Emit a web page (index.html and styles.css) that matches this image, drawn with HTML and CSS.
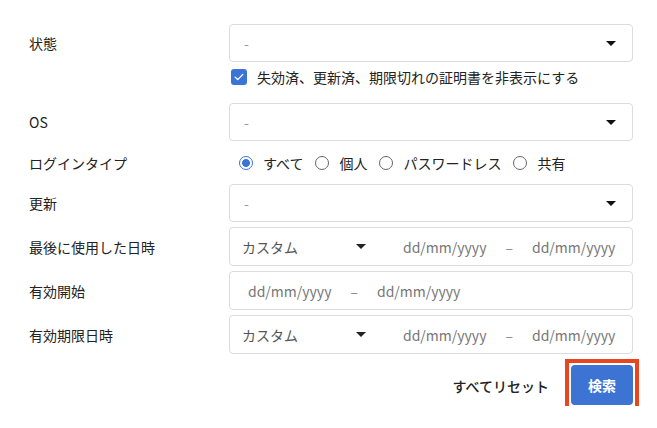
FILE: index.html
```html
<!DOCTYPE html>
<html lang="ja">
<head>
<meta charset="utf-8">
<link rel="stylesheet" href="styles.css">
</head>
<body>
<div class="form">
  <div class="row r-first">
    <div class="label">状態</div>
    <div class="ctrl"><div class="select"><span class="ph">-</span><span class="caret"></span></div></div>
  </div>
  <div class="row r-check">
    <div class="label"></div>
    <div class="ctrl">
      <div class="check">
        <span class="cbox"><svg width="10" height="8" viewBox="0 0 10 8"><path d="M1.2 4.2 L3.8 6.6 L8.8 1.4" fill="none" stroke="#fff" stroke-width="1.3" stroke-linecap="round" stroke-linejoin="round"/></svg></span>
        <span>失効済、更新済、期限切れの証明書を非表示にする</span>
      </div>
    </div>
  </div>
  <div class="row r-os">
    <div class="label">OS</div>
    <div class="ctrl"><div class="select"><span class="ph">-</span><span class="caret"></span></div></div>
  </div>
  <div class="row r-radio">
    <div class="label">ログインタイプ</div>
    <div class="ctrl">
      <div class="radios">
        <span class="radio on"></span><span class="rlabel">すべて</span>
        <span class="radio"></span><span class="rlabel">個人</span>
        <span class="radio"></span><span class="rlabel">パスワードレス</span>
        <span class="radio"></span><span class="rlabel">共有</span>
      </div>
    </div>
  </div>
  <div class="row r-upd">
    <div class="label">更新</div>
    <div class="ctrl"><div class="select"><span class="ph">-</span><span class="caret"></span></div></div>
  </div>
  <div class="row r-date">
    <div class="label">最後に使用した日時</div>
    <div class="ctrl">
      <div class="range">
        <div class="custom"><span>カスタム</span><span class="caret"></span></div>
        <div class="dates"><span class="date">dd/mm/yyyy</span><span class="dash">–</span><span class="date">dd/mm/yyyy</span></div>
      </div>
    </div>
  </div>
  <div class="row r-date">
    <div class="label">有効開始</div>
    <div class="ctrl">
      <div class="range plain">
        <div class="dates"><span class="date">dd/mm/yyyy</span><span class="dash">–</span><span class="date">dd/mm/yyyy</span></div>
      </div>
    </div>
  </div>
  <div class="row r-date">
    <div class="label">有効期限日時</div>
    <div class="ctrl">
      <div class="range">
        <div class="custom"><span>カスタム</span><span class="caret"></span></div>
        <div class="dates"><span class="date">dd/mm/yyyy</span><span class="dash">–</span><span class="date">dd/mm/yyyy</span></div>
      </div>
    </div>
  </div>
  <div class="footer">
    <span class="reset">すべてリセット</span>
    <span class="highlight"><button class="search">検索</button></span>
  </div>
</div>
</body>
</html>
```

FILE: styles.css
```css
* { box-sizing: border-box; }
html, body { margin: 0; padding: 0; background: #fff; }
body {
  font-family: "Noto Sans CJK JP", "Noto Sans", sans-serif;
  font-size: 14px;
  color: #222;
}
.form {
  width: 657px;
  padding: 24px 24px 0 29px;
}
.row {
  display: flex;
  align-items: center;
}
.label {
  width: 200px;
  flex: none;
  font-size: 14px;
  color: #222;
}
.ctrl {
  flex: 1;
}
.r-check { margin-top: 7px; height: 16px; }
.r-os { margin-top: 18px; }
.r-radio { margin-top: 12px; height: 20px; }
.r-upd { margin-top: 11px; }
.r-date { margin-top: 5px; }

.select {
  height: 38px;
  border: 1px solid #dcdcdc;
  border-radius: 4px;
  display: flex;
  align-items: center;
  justify-content: space-between;
  padding: 0 16px 0 14px;
}
.ph { color: #999; }
.caret {
  width: 0;
  height: 0;
  border-left: 5px solid transparent;
  border-right: 5px solid transparent;
  border-top: 5px solid #111;
}

.check {
  display: flex;
  align-items: center;
  margin-left: 2px;
  color: #222;
}
.cbox {
  width: 16px;
  height: 16px;
  border-radius: 3px;
  background: #3b74d6;
  display: flex;
  align-items: center;
  justify-content: center;
  margin-right: 10px;
}

.radios {
  display: flex;
  align-items: center;
  padding-left: 10px;
}
.radio {
  width: 14px;
  height: 14px;
  border-radius: 50%;
  border: 1px solid #666;
  margin-right: 10px;
  flex: none;
}
.radio.on {
  border-color: #3b74d6;
  background: radial-gradient(circle, #3b74d6 0 3.6px, #fff 4.2px);
}
.rlabel { margin-right: 12px; }

.range {
  height: 39px;
  border: 1px solid #dcdcdc;
  border-radius: 4px;
  display: flex;
  align-items: center;
  padding-left: 12px;
}
.range.plain { padding-left: 18px; }
.custom {
  width: 124px;
  display: flex;
  align-items: center;
  justify-content: space-between;
  color: #555;
}
.custom .caret { border-top-color: #222; }
.dates {
  display: flex;
  align-items: center;
  color: #777;
}
.range .custom + .dates { margin-left: 37px; }
.dash { margin: 0 19px; color: #888; }

.footer {
  display: flex;
  justify-content: flex-end;
  align-items: center;
  margin-top: 11px;
  gap: 16px;
}
.reset {
  font-weight: 500;
  color: #222;
}
.highlight {
  display: flex;
  border: 4px solid #e8461e;
  padding: 2px;
  margin: -6px -6px -5px 0;
}
.search {
  width: 62px;
  height: 40px;
  border: none;
  border-radius: 4px;
  background: #3d74d4;
  color: #fff;
  font-family: inherit;
  font-size: 14px;
  font-weight: 700;
  padding: 0;
}
```
